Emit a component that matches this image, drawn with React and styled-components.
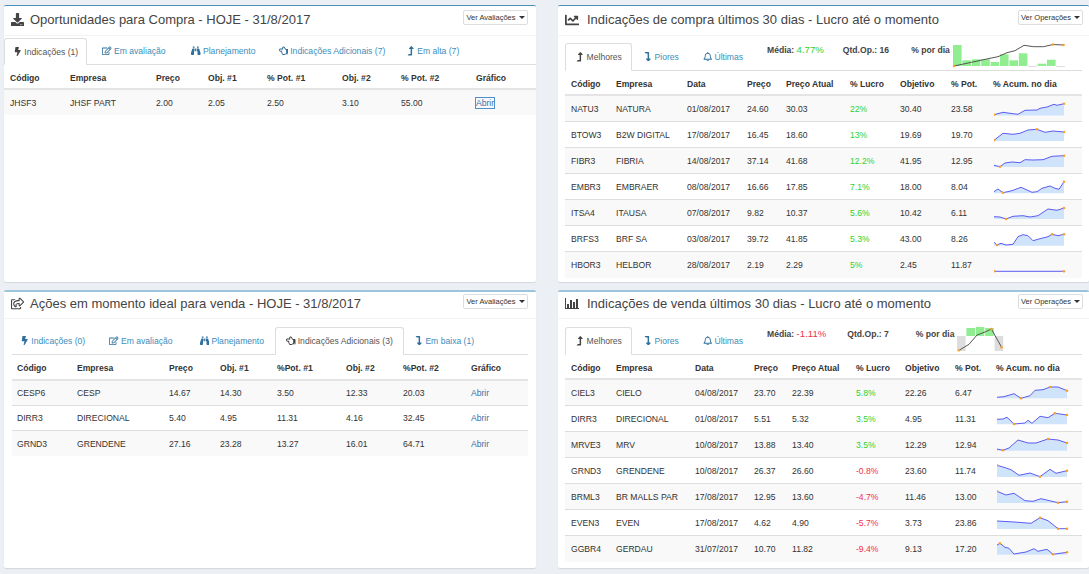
import React from "react";
import styled, { createGlobalStyle } from "styled-components";
import {
  FaBolt,
  FaBinoculars,
  FaDownload,
  FaChartLine,
  FaLevelUpAlt,
  FaLevelDownAlt,
  FaRegBell,
  FaRegEdit,
  FaRegHandPointLeft,
  FaRegShareSquare,
} from "react-icons/fa";

const GlobalStyle = createGlobalStyle`
  html, body {
    margin: 0;
    padding: 0;
    background: #ecf0f5;
    overflow: hidden;
  }
  body {
    font-family: "Liberation Sans", Arial, sans-serif;
    color: #333;
  }
`;

const Page = styled.div`
  width: 1089px;
  height: 574px;
  overflow: hidden;
  display: grid;
  grid-template-columns: 532px 531px;
  grid-template-rows: 277px 278px;
  column-gap: 22px;
  row-gap: 8px;
  padding: 5px 0 0 4px;
  box-sizing: border-box;
`;

const Box = styled.section`
  background: #fff;
  border-top: ${(p) => (p.$thick ? "2px solid #9cc5dd" : "1px solid #4a90bb")};
  border-radius: 2px;
  box-shadow: 0 1px 1px rgba(0, 0, 0, 0.1);
  box-sizing: border-box;
  overflow: hidden;
`;

const BoxHeader = styled.header`
  height: ${(p) => (p.$thick ? "23px" : "27px")};
  border-bottom: 1px solid #f4f4f4;
  display: flex;
  align-items: center;
  padding: 0 ${(p) => p.$right}px ${(p) => (p.$thick ? "3px" : "2px")} 7px;
  color: #444;
`;

const TitleIcon = styled.span`
  width: ${(p) => p.$w}px;
  flex: none;
  display: flex;
  align-items: center;
  font-size: ${(p) => p.$size || 13}px;
  color: #444;
`;

const Title = styled.h3`
  margin: 0;
  font-size: 13px;
  font-weight: 400;
  flex: 1;
  white-space: nowrap;
`;

const DropButton = styled.div`
  width: 65px;
  height: 15px;
  border: 1px solid #ddd;
  border-radius: 2px;
  display: flex;
  align-items: center;
  justify-content: center;
  gap: 3px;
  font-size: 7.5px;
  color: #333;
  box-sizing: border-box;
  align-self: flex-start;
  margin-top: ${(p) => (p.$thick ? "2px" : "4px")};
  &::after {
    content: "";
    border-top: 3px solid #333;
    border-left: 3px solid transparent;
    border-right: 3px solid transparent;
  }
`;

const Body = styled.div`
  padding: ${(p) => p.$pad || "0"};
`;

const TabBar = styled.div`
  display: flex;
  height: ${(p) => p.$h}px;
  border-bottom: 1px solid #ddd;
  box-sizing: border-box;
`;

const Tab = styled.div`
  display: flex;
  align-items: center;
  gap: 2px;
  width: ${(p) => p.$w}px;
  flex: none;
  box-sizing: border-box;
  justify-content: center;
  font-size: 8.6px;
  color: ${(p) => (p.$active ? "#555" : "#3c8dbc")};
  background: #fff;
  white-space: nowrap;
  ${(p) =>
    p.$active &&
    `
    border: 1px solid #ddd;
    border-bottom: 1px solid #fff;
    border-radius: 3px 3px 0 0;
    height: calc(100% + 1px);
  `}
  svg {
    font-size: 9.5px;
    flex: none;
    color: ${(p) => (p.$active ? "#444" : "#2f6f9c")};
  }
`;

const Stat = styled.div`
  font-size: 8.6px;
  font-weight: 700;
  color: #444;
  white-space: nowrap;
  margin-left: ${(p) => p.$ml}px;
  margin-top: ${(p) => p.$mt}px;
  b {
    font-weight: 400;
    font-size: 9.6px;
    color: ${(p) => p.$color || "#444"};
  }
`;

const ChartWrap = styled.div`
  margin-left: ${(p) => p.$ml}px;
  flex: none;
`;

const Row = styled.div`
  display: grid;
  grid-template-columns: ${(p) => p.$cols};
  height: ${(p) => p.$h}px;
  align-items: center;
  box-sizing: border-box;
  font-size: 8.6px;
  color: #333;
  white-space: nowrap;
  background: ${(p) => (p.$odd ? "#f9f9f9" : "#fff")};
  border-bottom: ${(p) => (p.$line ? "1px solid #ddd" : "none")};
`;

const HeadRow = styled(Row)`
  font-weight: 700;
  padding-top: 2px;
  border-bottom: 2px solid #e4e4e4;
  color: #333;
`;

const Cell = styled.div`
  padding-left: ${(p) => p.$pl ?? 6}px;
  color: ${(p) => p.$color || "inherit"};
`;

const LinkCell = styled(Cell)`
  color: #3c6fa8;
  span {
    outline: ${(p) => (p.$focus ? "1px solid #4d90d0" : "none")};
  }
`;

const SparkCell = styled.div`
  padding-left: ${(p) => p.$left}px;
  display: flex;
  align-items: center;
`;

const BarsIcon = () => (
  <svg width="14" height="11" viewBox="0 0 14 11" fill="#444">
    <rect x="0" y="0" width="1" height="11" />
    <rect x="0" y="10" width="14" height="1" />
    <rect x="2" y="6" width="2" height="4" />
    <rect x="5" y="2" width="2" height="8" />
    <rect x="8" y="4" width="2" height="6" />
    <rect x="11" y="1" width="2" height="9" />
  </svg>
);

// sparkline with dots on the last, highest and lowest points
const Spark = ({ xs, ys, bottom }) => {
  const line = xs.map((x, i) => `${x},${ys[i]}`).join(" ");
  const min = ys.indexOf(Math.max(...ys));
  const max = ys.indexOf(Math.min(...ys));
  const spots = [...new Set([min, max, ys.length - 1])];
  return (
    <svg width="72" height="20" viewBox="0 0 72 20">
      <polygon
        points={`${xs[0]},${bottom} ${line} ${xs[xs.length - 1]},${bottom}`}
        fill="#cfe3fb"
      />
      <polyline points={line} fill="none" stroke="#5c5cf0" strokeWidth="1" />
      {spots.map((i) => (
        <circle key={i} cx={xs[i]} cy={ys[i]} r="1.3" fill="#f9a030" />
      ))}
    </svg>
  );
};

const DayChart = ({ width, height, bars, base, line, spots }) => {
  const pts = line.map((p) => p.join(",")).join(" ");
  return (
    <svg width={width} height={height} viewBox={`0 0 ${width} ${height}`}>
      {bars.map((b, i) => (
        <rect
          key={i}
          x={b.x}
          y={b.v > 0 ? base - b.v : base}
          width="8.6"
          height={Math.abs(b.v)}
          fill={b.v > 0 ? "#90ee90" : "#ddd"}
        />
      ))}
      <polyline points={pts} fill="none" stroke="#555" strokeWidth="1" />
      {spots.map((i) => (
        <circle key={i} cx={line[i][0]} cy={line[i][1]} r="1.3" fill="#f9a030" />
      ))}
    </svg>
  );
};

const buyBars = [21, 5.7, 6.7, 6.7, 4, 11.7, 5.7, 12.7, -1, 2.3, 6.3, -1].map(
  (v, i) => ({ v, x: i * 9.4 })
);
const buyLine = [
  [1, 23], [18.5, 19.3], [37, 15.3], [45, 13.7], [54, 9.7], [62, 7.7],
  [71, 2.3], [80.5, 3.7], [90.5, 3.7], [100, 1.5], [110.5, 2],
];
const sellBars = [-15, 8, 9, 8, -15].map((v, i) => ({ v, x: i * 9.4 }));
const sellLine = [[2, 23.3], [12, 17.3], [20, 8], [28, 5], [34.4, 2], [44.6, 20.3]];

const opp1 = [["JHSF3", "JHSF PART", "2.00", "2.05", "2.50", "3.10", "55.00"]];
const opp2 = [
  ["CESP6", "CESP", "14.67", "14.30", "3.50", "12.33", "20.03"],
  ["DIRR3", "DIRECIONAL", "5.40", "4.95", "11.31", "4.16", "32.45"],
  ["GRND3", "GRENDENE", "27.16", "23.28", "13.27", "16.01", "64.71"],
];

const GREEN = "#2fd12f";
const RED = "#f0304a";

const buys = [
  { c: ["NATU3", "NATURA", "01/08/2017", "24.60", "30.03"], l: "22%", e: ["30.40", "23.58"], xs: [0, 9, 16, 24, 31, 43, 46, 53, 60, 63, 70], ys: [15.7, 13.3, 14.3, 15.3, 11.3, 11, 9.3, 8, 5.3, 6.3, 4.7], b: 16.5 },
  { c: ["BTOW3", "B2W DIGITAL", "17/08/2017", "16.45", "18.60"], l: "13%", e: ["19.69", "19.70"], xs: [0, 9, 19, 26, 34, 43, 51, 59, 70], ys: [15.3, 8.3, 9.3, 8.3, 5, 4.3, 7.3, 6, 7], b: 16 },
  { c: ["FIBR3", "FIBRIA", "14/08/2017", "37.14", "41.68"], l: "12.2%", e: ["41.95", "12.95"], xs: [0, 6, 11, 18, 26, 31, 39, 49, 58, 70], ys: [14.3, 15.7, 12, 11, 11.7, 8.7, 9, 8.7, 5.3, 4.7], b: 16 },
  { c: ["EMBR3", "EMBRAER", "08/08/2017", "16.66", "17.85"], l: "7.1%", e: ["18.00", "8.04"], xs: [0, 4, 9, 18, 27, 38, 43, 48, 56, 61, 65, 70], ys: [14.7, 12, 15.7, 13.7, 10.3, 15.3, 14.7, 11.3, 9, 11.3, 12.3, 4.7], b: 16.3 },
  { c: ["ITSA4", "ITAUSA", "07/08/2017", "9.82", "10.37"], l: "5.6%", e: ["10.42", "6.11"], xs: [0, 6, 12, 19, 29, 36, 44, 54, 63, 70], ys: [13.7, 14, 16, 13.3, 12.7, 14, 12.7, 6, 7.3, 5], b: 16 },
  { c: ["BRFS3", "BRF SA", "03/08/2017", "39.72", "41.85"], l: "5.3%", e: ["43.00", "8.26"], xs: [0, 3, 7, 12, 19, 24, 29, 34, 39, 46, 54, 58, 64, 70], ys: [13.3, 16, 14.3, 16, 15.3, 7.7, 5.7, 6.7, 11.7, 9.7, 7.7, 5.3, 6.7, 5.3], b: 16.7 },
  { c: ["HBOR3", "HELBOR", "28/08/2017", "2.19", "2.29"], l: "5%", e: ["2.45", "11.87"], xs: [0, 70], ys: [16.3, 16.3], b: 16.3 },
];

const sells = [
  { c: ["CIEL3", "CIELO", "04/08/2017", "23.70", "22.39"], l: "5.8%", k: GREEN, e: ["22.26", "6.47"], xs: [0, 7, 17, 24, 33, 38, 46, 53, 61, 70], ys: [14.3, 13.7, 10.7, 15.3, 12.7, 7.3, 6.7, 4, 4, 7.7], b: 15.3 },
  { c: ["DIRR3", "DIRECIONAL", "01/08/2017", "5.51", "5.32"], l: "3.5%", k: GREEN, e: ["4.95", "11.31"], xs: [0, 6, 10, 17, 28, 31, 35, 43, 51, 58, 70], ys: [10.3, 10, 8.3, 15, 14, 11.3, 14.3, 7.3, 8.7, 4.3, 6], b: 15.3 },
  { c: ["MRVE3", "MRV", "10/08/2017", "13.88", "13.40"], l: "3.5%", k: GREEN, e: ["12.29", "12.94"], xs: [0, 6, 12, 21, 31, 39, 51, 61, 70], ys: [14, 15.3, 13, 5, 8, 8, 4, 5, 8], b: 15.7 },
  { c: ["GRND3", "GRENDENE", "10/08/2017", "26.37", "26.60"], l: "-0.8%", k: RED, e: ["23.60", "11.74"], xs: [0, 7, 14, 22, 33, 43, 53, 59, 70], ys: [4.3, 6.3, 8.7, 14.3, 12, 15.7, 8.3, 12.3, 9.7], b: 16 },
  { c: ["BRML3", "BR MALLS PAR", "17/08/2017", "12.95", "13.60"], l: "-4.7%", k: RED, e: ["11.46", "13.00"], xs: [0, 9, 17, 28, 36, 44, 61, 70], ys: [4.3, 8, 6.3, 13.7, 14.3, 11.7, 15.7, 14.7], b: 16 },
  { c: ["EVEN3", "EVEN", "17/08/2017", "4.62", "4.90"], l: "-5.7%", k: RED, e: ["3.73", "23.86"], xs: [0, 17, 34, 43, 51, 61, 70], ys: [8, 9, 10.3, 4.7, 7.7, 15.7, 15.7], b: 16 },
  { c: ["GGBR4", "GERDAU", "31/07/2017", "10.70", "11.82"], l: "-9.4%", k: RED, e: ["9.13", "17.20"], xs: [0, 3, 8, 12, 17, 29, 37, 41, 50, 56, 70], ys: [6, 4.3, 8.3, 9.3, 15, 13, 9.7, 12.3, 10.3, 15.3, 13.3], b: 15.7 },
];

const colsOpp1 = "60px 86px 52px 59px 75px 59px 75px 1fr";
const colsOpp2 = "60px 92px 51px 57px 69px 57px 68px 1fr";
const colsBuy = "45px 71px 60px 39px 64px 50px 51px 42px 1fr";
const colsSell = "45px 79px 59px 38px 64px 49px 50px 41px 1fr";

const PerfTable = ({ cols, head, rows, left }) => (
  <div>
    <HeadRow $cols={cols} $h={25}>
      {head.map((h) => (
        <Cell key={h}>{h}</Cell>
      ))}
    </HeadRow>
    {rows.map((r, i) => (
      <Row key={r.c[0]} $cols={cols} $h={26} $odd={i % 2 === 0} $line={i < rows.length - 1}>
        {r.c.map((t) => (
          <Cell key={t}>{t}</Cell>
        ))}
        <Cell $color={r.k || GREEN}>{r.l}</Cell>
        {r.e.map((t) => (
          <Cell key={t}>{t}</Cell>
        ))}
        <SparkCell $left={left}>
          <Spark xs={r.xs} ys={r.ys} bottom={r.b} />
        </SparkCell>
      </Row>
    ))}
  </div>
);

const OppTable = ({ cols, head, rows, headH, inset, focus }) => (
  <div>
    <HeadRow $cols={cols} $h={headH}>
      {head.map((h) => (
        <Cell key={h} $pl={inset}>{h}</Cell>
      ))}
    </HeadRow>
    {rows.map((r, i) => (
      <Row key={r[0]} $cols={cols} $h={25} $odd={i % 2 === 0} $line={i < rows.length - 1}>
        {r.map((t, j) => (
          <Cell key={j} $pl={inset}>{t}</Cell>
        ))}
        <LinkCell $pl={inset} $focus={focus}>
          <span>Abrir</span>
        </LinkCell>
      </Row>
    ))}
  </div>
);

const perfHead = ["Código", "Empresa", "Data", "Preço", "Preço Atual", "% Lucro", "Objetivo", "% Pot.", "% Acum. no dia"];

const App = () => (
  <>
    <GlobalStyle />
    <Page>
      <Box>
        <BoxHeader $right={8}>
          <TitleIcon $w={19}><FaDownload /></TitleIcon>
          <Title>Oportunidades para Compra - HOJE - 31/8/2017</Title>
          <DropButton>Ver Avaliações</DropButton>
        </BoxHeader>
        <Body $pad="2px 0 0 0">
          <TabBar $h={27}>
            <Tab $active $w={83}><FaBolt />Indicações (1)</Tab>
            <Tab $w={94}><FaRegEdit />Em avaliação</Tab>
            <Tab $w={85}><FaBinoculars />Planejamento</Tab>
            <Tab $w={132}><FaRegHandPointLeft />Indicações Adicionais (7)</Tab>
            <Tab $w={69}><FaLevelUpAlt />Em alta (7)</Tab>
          </TabBar>
          <OppTable
            cols={colsOpp1}
            head={["Código", "Empresa", "Preço", "Obj. #1", "% Pot. #1", "Obj. #2", "% Pot. #2", "Gráfico"]}
            rows={opp1}
            headH={25}
            inset={6}
            focus
          />
        </Body>
      </Box>

      <Box>
        <BoxHeader $right={6}>
          <TitleIcon $w={22} $size={14}><FaChartLine /></TitleIcon>
          <Title>Indicações de compra últimos 30 dias - Lucro até o momento</Title>
          <DropButton>Ver Operações</DropButton>
        </BoxHeader>
        <Body $pad="7px 7px 0 7px">
          <TabBar $h={28}>
            <Tab $active $w={67}><FaLevelUpAlt />Melhores</Tab>
            <Tab $w={58}><FaLevelDownAlt />Piores</Tab>
            <Tab $w={66}><FaRegBell />Últimas</Tab>
            <Stat $ml={11} $mt={1} $color={GREEN}>Média: <b>4.77%</b></Stat>
            <Stat $ml={19} $mt={2}>Qtd.Op.: 16</Stat>
            <Stat $ml={22} $mt={2}>% por dia</Stat>
            <ChartWrap $ml={3}>
              <DayChart width={114} height={27} bars={buyBars} base={23} line={buyLine} spots={[0, 9, 10]} />
            </ChartWrap>
          </TabBar>
          <PerfTable cols={colsBuy} head={perfHead} rows={buys} left={7} />
        </Body>
      </Box>

      <Box $thick>
        <BoxHeader $thick $right={8}>
          <TitleIcon $w={19}><FaRegShareSquare /></TitleIcon>
          <Title>Ações em momento ideal para venda - HOJE - 31/8/2017</Title>
          <DropButton $thick>Ver Avaliações</DropButton>
        </BoxHeader>
        <Body $pad="8px 8px 0 8px">
          <TabBar $h={28}>
            <Tab $w={81}><FaBolt />Indicações (0)</Tab>
            <Tab $w={96}><FaRegEdit />Em avaliação</Tab>
            <Tab $w={86}><FaBinoculars />Planejamento</Tab>
            <Tab $active $w={129}><FaRegHandPointLeft />Indicações Adicionais (3)</Tab>
            <Tab $w={80}><FaLevelDownAlt />Em baixa (1)</Tab>
          </TabBar>
          <OppTable
            cols={colsOpp2}
            head={["Código", "Empresa", "Preço", "Obj. #1", "%Pot. #1", "Obj. #2", "%Pot. #2", "Gráfico"]}
            rows={opp2}
            headH={26}
            inset={5}
          />
        </Body>
      </Box>

      <Box $thick>
        <BoxHeader $thick $right={6}>
          <TitleIcon $w={22}><BarsIcon /></TitleIcon>
          <Title>Indicações de venda últimos 30 dias - Lucro até o momento</Title>
          <DropButton $thick>Ver Operações</DropButton>
        </BoxHeader>
        <Body $pad="8px 7px 0 7px">
          <TabBar $h={28}>
            <Tab $active $w={67}><FaLevelUpAlt />Melhores</Tab>
            <Tab $w={58}><FaLevelDownAlt />Piores</Tab>
            <Tab $w={66}><FaRegBell />Últimas</Tab>
            <Stat $ml={11} $mt={1} $color={RED}>Média: <b>-1.11%</b></Stat>
            <Stat $ml={21} $mt={2}>Qtd.Op.: 7</Stat>
            <Stat $ml={27} $mt={2}>% por dia</Stat>
            <ChartWrap $ml={2}>
              <DayChart width={48} height={27} bars={sellBars} base={9} line={sellLine} spots={[0, 4, 5]} />
            </ChartWrap>
          </TabBar>
          <PerfTable cols={colsSell} head={perfHead} rows={sells} left={7} />
        </Body>
      </Box>
    </Page>
  </>
);

export default App;
